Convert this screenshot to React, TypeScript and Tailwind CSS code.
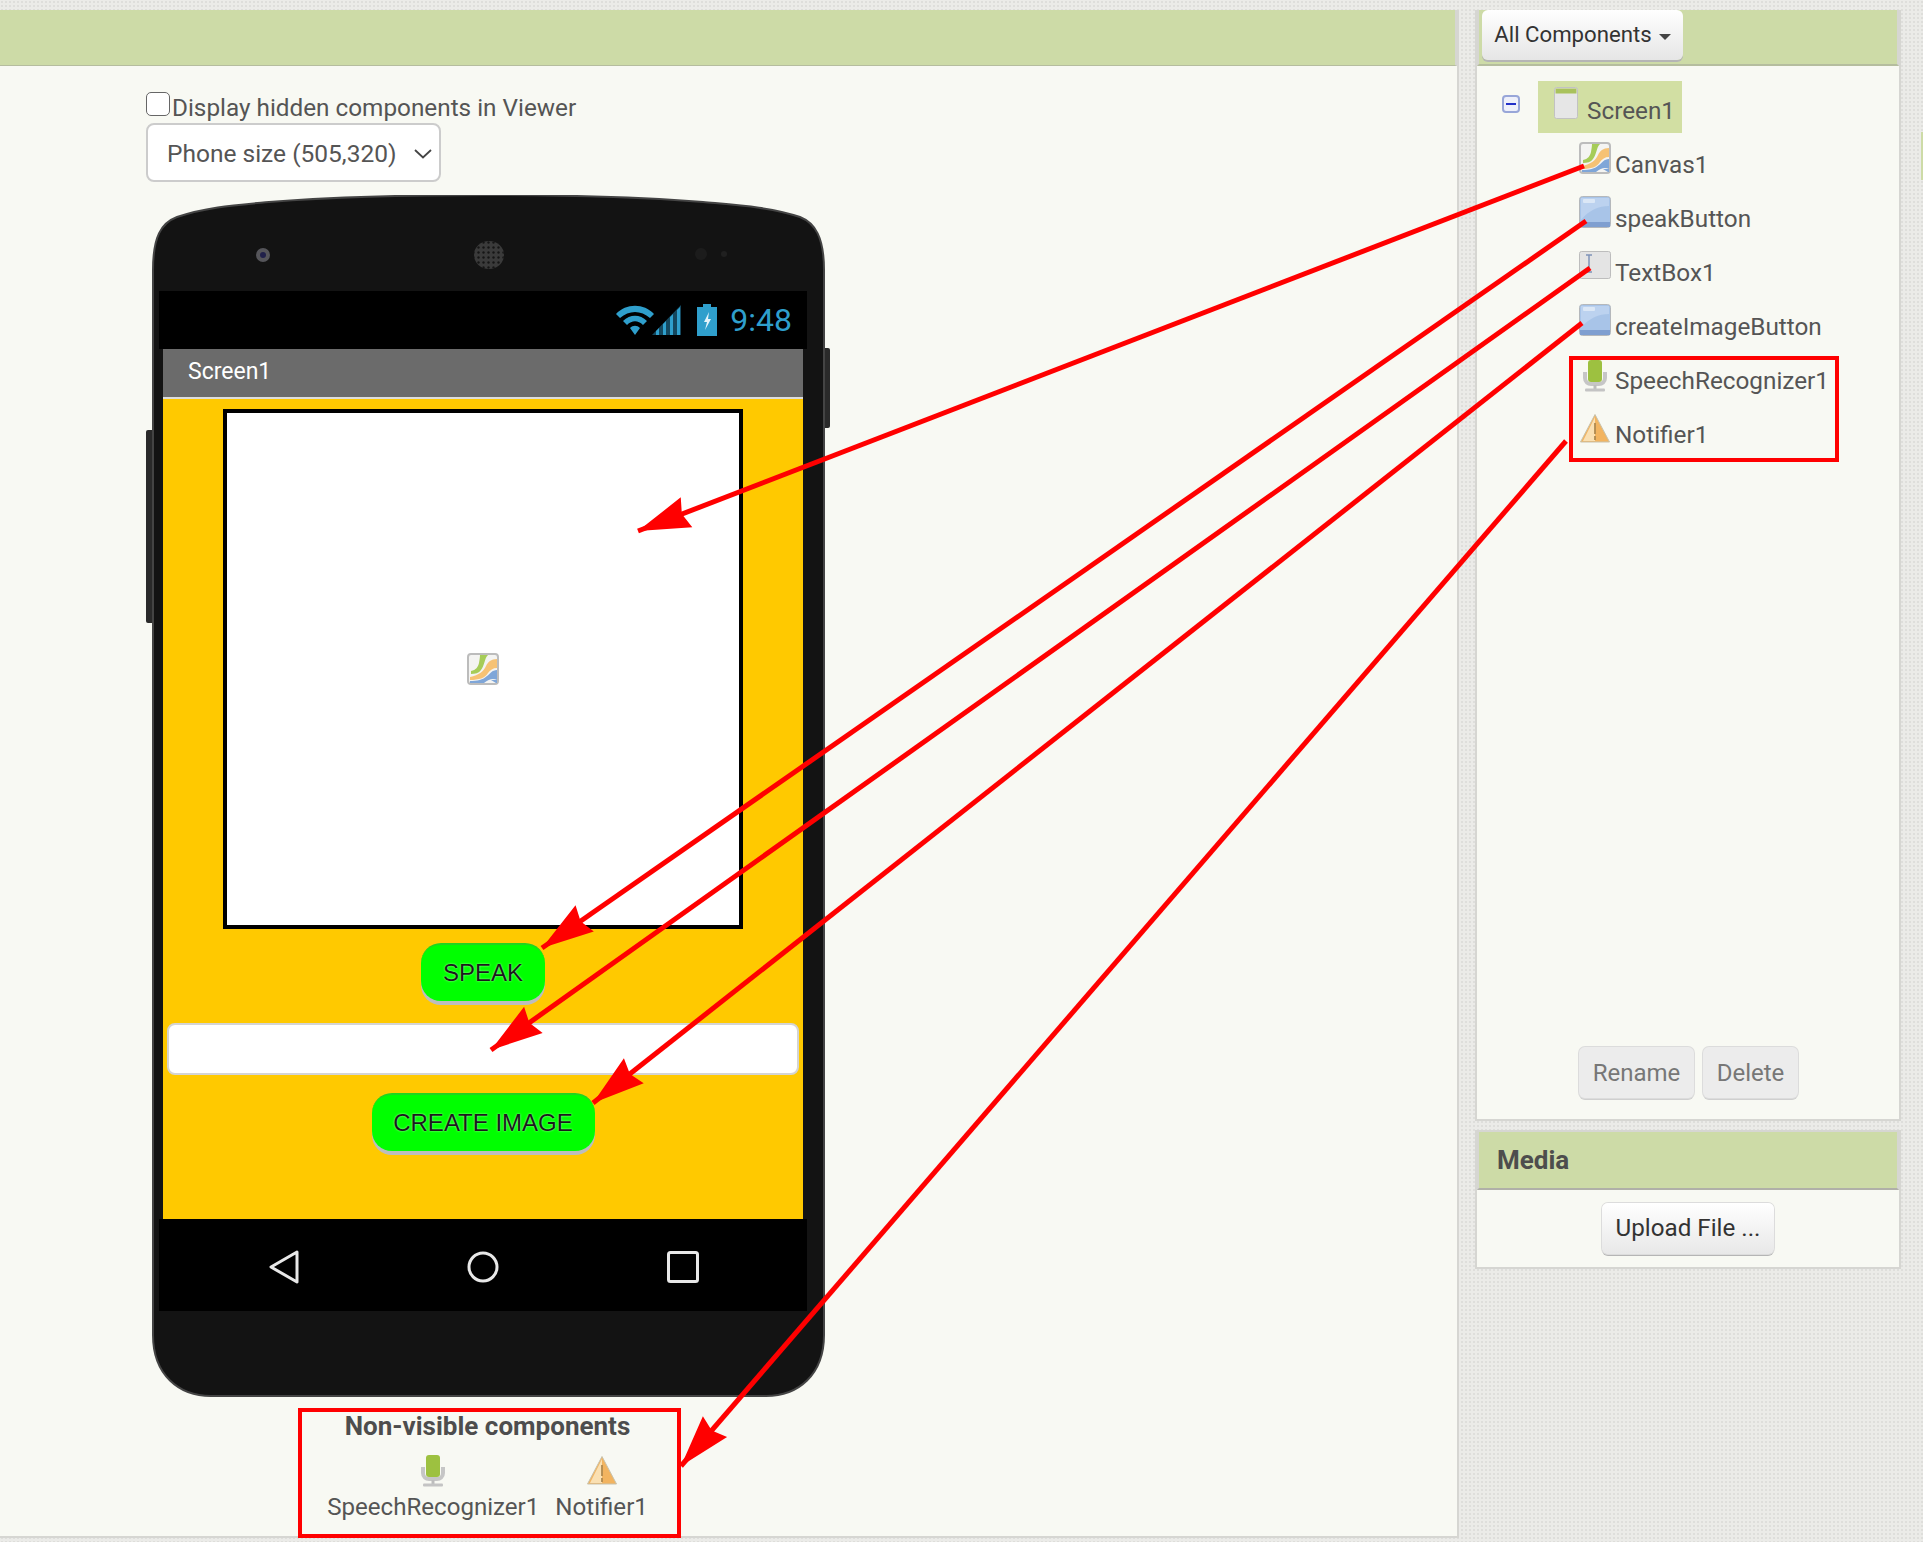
const arrows = [
  { from: [1584, 166], tip: [638, 531] },
  { from: [1586, 221], tip: [542, 948] },
  { from: [1590, 268], tip: [491, 1050] },
  { from: [1582, 323], tip: [593, 1103] },
  { from: [1566, 441], tip: [681, 1466] }
]

const arrowHead = (from: number[], tip: number[]) => {
  const dx = from[0] - tip[0]
  const dy = from[1] - tip[1]
  const len = Math.hypot(dx, dy)
  const ux = dx / len
  const uy = dy / len
  const px = -uy
  const py = ux
  const back = [tip[0] + ux * 52, tip[1] + uy * 52]
  const notch = [tip[0] + ux * 47, tip[1] + uy * 47]
  return [
    tip,
    [back[0] + px * 16, back[1] + py * 16],
    notch,
    [back[0] - px * 16, back[1] - py * 16]
  ]
    .map((p) => p.join(","))
    .join(" ")
}

const CanvasIcon = ({ className }: { className?: string }) => (
  <svg viewBox="0 0 32 32" className={className}>
    <rect x="1" y="1" width="30" height="30" rx="3" fill="#f4f4f2" stroke="#bcbcbc" strokeWidth="2" />
    <path d="M30 17 C25 17 23 21 20 23 C16 27 10 28 3 28 L3 30 H17 C22 26 26 25 30 27 Z" fill="#7fa6d8" />
    <path d="M30 27 L24 27 L29 30 H30 Z" fill="#7fa6d8" />
    <path d="M30 6 C24 6 21 9 19 13 C17 18 12 22 3 24 L3 27 C12 27 18 25 21 20 C23 17 26 15 30 15 Z" fill="#f6c274" />
    <path d="M13 2 H21 C17 6 18 12 14 17 C12 20 8 21 4 21 L4 18 C9 17 11 14 12 10 C12.5 7 13 4 13 2 Z" fill="#a6cc58" />
  </svg>
)

const ButtonIcon = ({ className }: { className?: string }) => (
  <svg viewBox="0 0 32 32" className={className}>
    <rect x="0.5" y="0.5" width="31" height="31" rx="3" fill="#a8c4e8" stroke="#b5b8bb" />
    <path d="M2 2 H30 V10 C20 10 10 14 2 24 Z" fill="#bcd2ef" />
    <rect x="4" y="3" width="12" height="4" rx="1" fill="#dbe7f6" />
    <rect x="1" y="26" width="30" height="5" fill="#7f9fd0" />
  </svg>
)

const TextBoxIcon = ({ className }: { className?: string }) => (
  <svg viewBox="0 0 32 28" className={className}>
    <rect x="0.5" y="0.5" width="31" height="27" rx="2" fill="#e4e4e4" stroke="#bdbdbd" />
    <path d="M7 4 H13 M10 4 V21 M7 21 H13" stroke="#7f93b8" strokeWidth="1.5" fill="none" />
  </svg>
)

const ScreenIcon = ({ className }: { className?: string }) => (
  <svg viewBox="0 0 24 32" className={className}>
    <rect x="0.5" y="0.5" width="23" height="31" rx="2" fill="#e6e6e6" stroke="#c2c2c2" />
    <rect x="1.5" y="1.5" width="21" height="5" fill="#a9c25c" />
  </svg>
)

const MicIcon = ({ className }: { className?: string }) => (
  <svg viewBox="0 0 26 32" className={className}>
    <path d="M3 12 V18 C3 22 6 24 9 24 H17 C20 24 23 22 23 18 V12" fill="none" stroke="#c6c6c6" strokeWidth="4" />
    <rect x="6" y="0" width="14" height="22" rx="3" fill="#9dc140" />
    <rect x="11.5" y="25" width="3" height="4" fill="#bdbdbd" />
    <rect x="3" y="28.5" width="20" height="3" rx="1" fill="#c4c4c4" />
  </svg>
)

const WarningIcon = ({ className }: { className?: string }) => (
  <svg viewBox="0 0 30 29" className={className}>
    <path d="M15 0.5 L29.5 28 H0.5 Z" fill="#f2b460" stroke="#c8c2ac" />
    <path d="M15 3 L3 27 H15 Z" fill="#fae0b2" />
    <path d="M15 9 V20 M15 22 V26" stroke="#b08a50" strokeWidth="1.8" />
  </svg>
)

const treeRows = [
  { name: "Canvas1", icon: <CanvasIcon className="mt-[4px] h-[32px] w-[32px]" /> },
  { name: "speakButton", icon: <ButtonIcon className="mt-[4px] h-[32px] w-[32px]" /> },
  { name: "TextBox1", icon: <TextBoxIcon className="mt-[5px] h-[28px] w-[32px]" /> },
  { name: "createImageButton", icon: <ButtonIcon className="mt-[4px] h-[32px] w-[32px]" /> },
  { name: "SpeechRecognizer1", icon: <MicIcon className="mt-[6px] h-[32px] w-[32px]" /> },
  { name: "Notifier1", icon: <WarningIcon className="mt-[6px] h-[29px] w-[32px]" /> }
]

const PhoneShell = () => (
  <svg viewBox="0 0 685 1202" className="absolute inset-0 h-full w-full">
    <defs>
      <pattern id="speaker-mesh" width="5" height="5" patternUnits="userSpaceOnUse">
        <circle cx="2.5" cy="2.5" r="1.2" fill="#151515" />
      </pattern>
    </defs>
    <rect x="0" y="235" width="9" height="193" rx="2" fill="#2a2a2a" />
    <rect x="676" y="153" width="8" height="80" rx="2" fill="#2a2a2a" />
    <path
      d="M7 75 C7 42 15 28 31 22 C60 12 90 10 123 7 C200 1 270 0 340 0 C410 0 480 1 557 7 C590 10 625 12 654 22 C669 28 678 42 678 75 L678 1140 C678 1180 652 1201 620 1201 L65 1201 C33 1201 7 1180 7 1140 Z"
      fill="#131313"
      stroke="#444"
      strokeWidth="2"
    />
    <circle cx="117" cy="60" r="7" fill="#55555a" />
    <circle cx="117" cy="60" r="3" fill="#20204a" />
    <ellipse cx="343" cy="60" rx="15" ry="14" fill="#3a3a3a" />
    <ellipse cx="343" cy="60" rx="15" ry="14" fill="url(#speaker-mesh)" />
    <circle cx="555" cy="59" r="6" fill="#1c1c1c" />
    <circle cx="578" cy="59" r="3" fill="#202020" />
  </svg>
)

const App = () => {
  return (
    <div className="relative h-[1542px] w-[1923px] overflow-hidden bg-[#ebebe8] bg-[radial-gradient(#dededb_1px,transparent_1px)] bg-size-[4px_4px] font-['Roboto',sans-serif] text-[#555]">
      <div className="flex pt-[10px]">
        <main className="flex h-[1528px] w-[1459px] shrink-0 flex-col border-r-2 border-b-2 border-[#d6d6d2] bg-[#f8f9f3]">
          <div className="h-[56px] border-r-2 border-b border-[#d6d6d2] border-b-[#b5bd9e] bg-[#cddba7]" />
          <div className="flex flex-col pl-[146px]">
            <label className="mt-[26px] flex h-[31px] items-start">
              <input
                type="checkbox"
                className="h-[24px] w-[24px] appearance-none rounded-[5px] border border-[#666] bg-white"
              />
              <span className="mt-[2px] ml-[2px] text-[24.3px] leading-[28px]">
                Display hidden components in Viewer
              </span>
            </label>
            <div className="flex h-[59px] w-[295px] items-center justify-between rounded-[8px] border-2 border-[#ccc] bg-white pt-[3px] pr-[7px] pl-[19px] text-[24.5px]">
              <span>Phone size (505,320)</span>
              <svg viewBox="0 0 18 10" className="h-[10px] w-[18px]">
                <path d="M1 1 L9 8.5 L17 1" fill="none" stroke="#444" strokeWidth="1.8" />
              </svg>
            </div>
            <div className="relative mt-[13px] h-[1202px] w-[685px]">
              <PhoneShell />
              <div className="relative ml-[13px] flex w-[648px] flex-col pt-[96px]">
                <div className="flex h-[58px] items-center justify-end bg-black pr-[15px]">
                  <svg viewBox="0 0 66 32" className="h-[32px] w-[66px]">
                    <path d="M0 10 C10 -1 28 -1 38 10 L34 14 C25 6 13 6 4 14 Z M7 17 C14 10 24 10 31 17 L27 21 C22 16 16 16 11 21 Z M14 24 C17 21 21 21 24 24 L19 31 Z" fill="#2f9fcc" />
                    <path d="M36 31 L65 1 V31 Z" fill="#14485f" />
                    <path d="M40 31 V27 L43 24 V31 Z M47 31 V20 L50 17 V31 Z M54 31 V13 L57 10 V31 Z M61 31 V6 L64 3 V31 Z" fill="#2f9fcc" />
                  </svg>
                  <svg viewBox="0 0 20 32" className="ml-[15px] h-[32px] w-[20px]">
                    <path d="M6 0 H14 V3 H20 V32 H0 V3 H6 Z" fill="#2f9fcc" />
                    <path d="M12 8 L7 18 H10 L8 26 L14 15 H11 Z" fill="#e4f3fa" />
                  </svg>
                  <span className="ml-[13px] text-[32px] leading-none text-[#2f9fcc]">9:48</span>
                </div>
                <div className="mx-[4px] flex h-[48px] items-center bg-[#6b6b6b] pb-[2px] pl-[25px] text-[23px] text-white">
                  Screen1
                </div>
                <div className="mx-[4px] flex h-[822px] flex-col items-center border-t-2 border-[#ddd] bg-[#ffc900] pt-[10px]">
                  <div className="flex h-[520px] w-[520px] items-center justify-center border-4 border-black bg-white">
                    <CanvasIcon className="h-[32px] w-[32px]" />
                  </div>
                  <div className="mt-[14px] flex h-[58px] w-[124px] items-center justify-center rounded-[20px] border-t-2 border-[#1fd51f] bg-[#00ff00] font-['Liberation_Sans',sans-serif] text-[24px] text-[#1a1a1a] shadow-[0_4px_0_#bdbdbd] [text-shadow:0_0_2px_#b8ffb8]">
                    SPEAK
                  </div>
                  <div className="mt-[22px] h-[52px] w-[632px] rounded-[8px] border-2 border-[#d4d4d4] bg-white" />
                  <div className="mt-[18px] flex h-[58px] w-[223px] items-center justify-center rounded-[20px] border-t-2 border-[#1fd51f] bg-[#00ff00] font-['Liberation_Sans',sans-serif] text-[24px] text-[#1a1a1a] shadow-[0_4px_0_#bdbdbd] [text-shadow:0_0_2px_#b8ffb8]">
                    CREATE IMAGE
                  </div>
                </div>
                <div className="flex h-[92px] items-center bg-black pt-[4px] pl-[110px]">
                  <svg viewBox="0 0 30 34" className="h-[34px] w-[30px]">
                    <path d="M28 2 L2 17 L28 32 Z" fill="none" stroke="#e8e8e8" strokeWidth="3" strokeLinejoin="round" />
                  </svg>
                  <svg viewBox="0 0 32 32" className="ml-[168px] h-[32px] w-[32px]">
                    <circle cx="16" cy="16" r="14" fill="none" stroke="#e8e8e8" strokeWidth="3" />
                  </svg>
                  <svg viewBox="0 0 32 32" className="ml-[168px] h-[32px] w-[32px]">
                    <rect x="1.5" y="1.5" width="29" height="29" rx="2" fill="none" stroke="#e8e8e8" strokeWidth="3" />
                  </svg>
                </div>
              </div>
            </div>
            <div className="mt-[13px] flex w-[683px] flex-col items-center">
              <h2 className="text-[26px] leading-[32px] font-bold text-[#4d4d4d]">
                Non-visible components
              </h2>
              <div className="mt-[13px] flex gap-[16px]">
                <div className="flex flex-col items-center">
                  <MicIcon className="h-[32px] w-[32px]" />
                  <span className="mt-[4px] text-[24.1px] leading-[32px]">SpeechRecognizer1</span>
                </div>
                <div className="flex flex-col items-center">
                  <WarningIcon className="mt-[1px] h-[29px] w-[32px]" />
                  <span className="mt-[6px] text-[24.1px] leading-[32px]">Notifier1</span>
                </div>
              </div>
            </div>
          </div>
        </main>

        <aside className="ml-[16px] flex w-[426px] shrink-0 flex-col">
          <div className="flex h-[1111px] flex-col border-x-2 border-b-2 border-[#d6d6d2] bg-[#f8f9f3]">
            <div className="h-[56px] border-x-2 border-b-2 border-[#d6d6d2] border-b-[#b5bd9e] bg-[#cddba7] pl-[3px]">
              <div className="flex h-[50px] w-[201px] items-center justify-center gap-[7px] rounded-[6px] bg-gradient-to-b from-white to-[#e6e6e6] text-[22.2px] text-[#333] shadow-[0_2px_0_#b5b5b5]">
                All Components
                <span className="mt-[3px] border-x-[6px] border-t-[6px] border-x-transparent border-t-[#444]" />
              </div>
            </div>
            <div className="flex flex-1 flex-col">
              <div className="mt-[15px] flex h-[52px] items-start pl-[25px]">
                <span className="mt-[14px] flex h-[18px] w-[18px] items-center justify-center rounded-[4px] border-2 border-[#98a6d8] bg-[#eef0fa]">
                  <span className="h-[2px] w-[10px] bg-[#2230c8]" />
                </span>
                <div className="ml-[18px] flex h-[52px] w-[144px] items-start bg-[#d2dfa3] pl-[16px]">
                  <ScreenIcon className="mt-[6px] h-[32px] w-[24px]" />
                  <span className="mt-[14px] ml-[9px] text-[24.3px] leading-[32px]">Screen1</span>
                </div>
              </div>
              <div className="mt-[5px] flex flex-col">
                {treeRows.map((row) => (
                  <div key={row.name} className="flex h-[54px] items-start pl-[102px]">
                    {row.icon}
                    <span className="ml-[4px] text-[24.3px] leading-[54px]">{row.name}</span>
                  </div>
                ))}
              </div>
              <div className="mt-auto mb-[21px] flex gap-[9px] pl-[102px] text-[24px] text-[#777]">
                <div className="flex h-[51px] w-[115px] items-center justify-center rounded-[6px] bg-[#ececec] shadow-[0_0_0_1px_#dcdcdc,0_2px_0_#cfcfcf]">
                  Rename
                </div>
                <div className="flex h-[51px] w-[95px] items-center justify-center rounded-[6px] bg-[#ececec] shadow-[0_0_0_1px_#dcdcdc,0_2px_0_#cfcfcf]">
                  Delete
                </div>
              </div>
            </div>
          </div>
          <div className="mt-[9px] flex h-[139px] flex-col border-2 border-[#d6d6d2] bg-[#f8f9f3]">
            <div className="flex h-[58px] items-center border-x-2 border-b-2 border-[#d6d6d2] border-b-[#b0b0a8] bg-[#cddba7] pl-[18px] text-[26px] font-bold text-[#4d4d4d]">
              Media
            </div>
            <div className="flex flex-1 items-center justify-center">
              <div className="flex h-[51px] w-[172px] items-center justify-center rounded-[6px] bg-gradient-to-b from-white to-[#e8e8e8] text-[24.2px] text-[#333] shadow-[0_0_0_1px_#dcdcdc,0_2px_0_#b5b5b5]">
                Upload File ...
              </div>
            </div>
          </div>
        </aside>

        <div className="ml-[20px] flex w-[2px] flex-col pt-[122px]">
          <div className="h-[48px] bg-[#cddba7]" />
        </div>
      </div>

      {/* red annotations drawn over the screenshot */}
      <svg viewBox="0 0 1923 1542" className="pointer-events-none absolute inset-0 h-full w-full">
        <rect x="1571" y="358" width="266" height="102" fill="none" stroke="#ff0000" strokeWidth="4" />
        <rect x="300" y="1410" width="379" height="126" fill="none" stroke="#ff0000" strokeWidth="4" />
        {arrows.map((arrow) => (
          <g key={arrow.from.join("-")}>
            <line
              x1={arrow.from[0]}
              y1={arrow.from[1]}
              x2={arrow.tip[0]}
              y2={arrow.tip[1]}
              stroke="#ff0000"
              strokeWidth="5"
            />
            <polygon points={arrowHead(arrow.from, arrow.tip)} fill="#ff0000" />
          </g>
        ))}
      </svg>
    </div>
  )
}

export default App
